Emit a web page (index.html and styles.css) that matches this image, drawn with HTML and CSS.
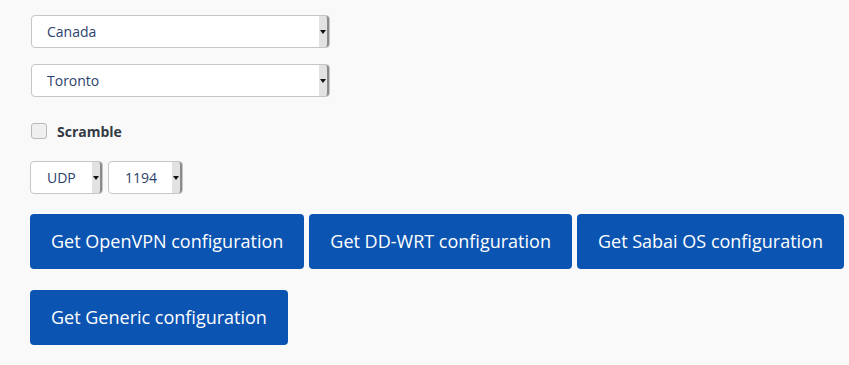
FILE: index.html
```html
<!DOCTYPE html>
<html lang="en">
<head>
  <meta charset="UTF-8">
  <title>VPN configuration</title>
  <link rel="stylesheet" href="styles.css">
</head>
<body>
  <div class="panel">
    <!-- location -->
    <div class="field">
      <span class="select wide"><select><option>Canada</option></select></span>
    </div>
    <div class="field">
      <span class="select wide"><select><option>Toronto</option></select></span>
    </div>

    <label class="check">
      <input type="checkbox">
      <span class="box"></span>
      <span class="check-text">Scramble</span>
    </label>

    <!-- protocol / port -->
    <div class="field inline">
      <span class="select small"><select><option>UDP</option></select></span>
      <span class="select small port"><select><option>1194</option></select></span>
    </div>

    <div class="buttons">
      <button class="btn">Get OpenVPN configuration</button>
      <button class="btn">Get DD-WRT configuration</button>
      <button class="btn">Get Sabai OS configuration</button>
      <button class="btn">Get Tomato configuration</button>
      <button class="btn">Get Generic configuration</button>
    </div>
  </div>
</body>
</html>
```

FILE: styles.css
```css
* { box-sizing: border-box; }
html, body {
  overflow: hidden;
}
body {
  margin: 0;
  background: #f9f9f9;
  font-family: 'Open Sans', 'Liberation Sans', sans-serif;
  color: #333a44;
}
.panel {
  width: 1200px;
  padding: 15px 0 0 30px;
}
.field {
  margin-bottom: 16px;
}
.field.inline {
  display: flex;
  gap: 5px;
  margin-bottom: 20px;
}

/* custom select with the small arrow strip */
.select {
  position: relative;
  display: inline-block;
  height: 33px;
}
.select.wide { width: 299px; margin-left: 1px; }
.select.small { width: 73px; }
.select.small.port { width: 75px; }
.select select {
  appearance: none;
  -webkit-appearance: none;
  width: 100%;
  height: 100%;
  margin: 0;
  border: 1px solid #c6c6c6;
  border-radius: 4px;
  background: #fff;
  padding: 0 14px 1px 15px;
  font-family: 'Open Sans', 'Liberation Sans', sans-serif;
  font-size: 14px;
  color: #2b3f6c;
}
.select.small select {
  padding-left: 16px;
}
.select::after {
  content: '';
  position: absolute;
  top: 1px;
  right: 1px;
  bottom: 1px;
  width: 8px;
  background: #e2e2e2;
  border-right: 2px solid #8a8a8a;
  border-radius: 0 3px 3px 0;
}
.select::before {
  content: '';
  position: absolute;
  z-index: 1;
  top: 15px;
  right: 4px;
  border-left: 3px solid transparent;
  border-right: 3px solid transparent;
  border-top: 4px solid #111;
}

/* checkbox */
.check {
  display: flex;
  align-items: center;
  margin: 25px 0 21px 1px;
  height: 18px;
  cursor: pointer;
}
.check input { display: none; }
.check .box {
  width: 16px;
  height: 16px;
  border: 1px solid #b9b9b9;
  border-radius: 3px;
  background: #efefef;
}
.check-text {
  margin-left: 10px;
  font-size: 14px;
  font-weight: 700;
  color: #333a44;
}

/* buttons */
.buttons {
  display: flex;
  flex-wrap: wrap;
  gap: 21px 5px;
  width: 1130px;
}
.btn {
  height: 55px;
  padding: 0 21px 2px;
  border: none;
  border-radius: 4px;
  background: #0b54b2;
  color: #fff;
  font-family: 'Open Sans', 'Liberation Sans', sans-serif;
  font-size: 18px;
}
```
